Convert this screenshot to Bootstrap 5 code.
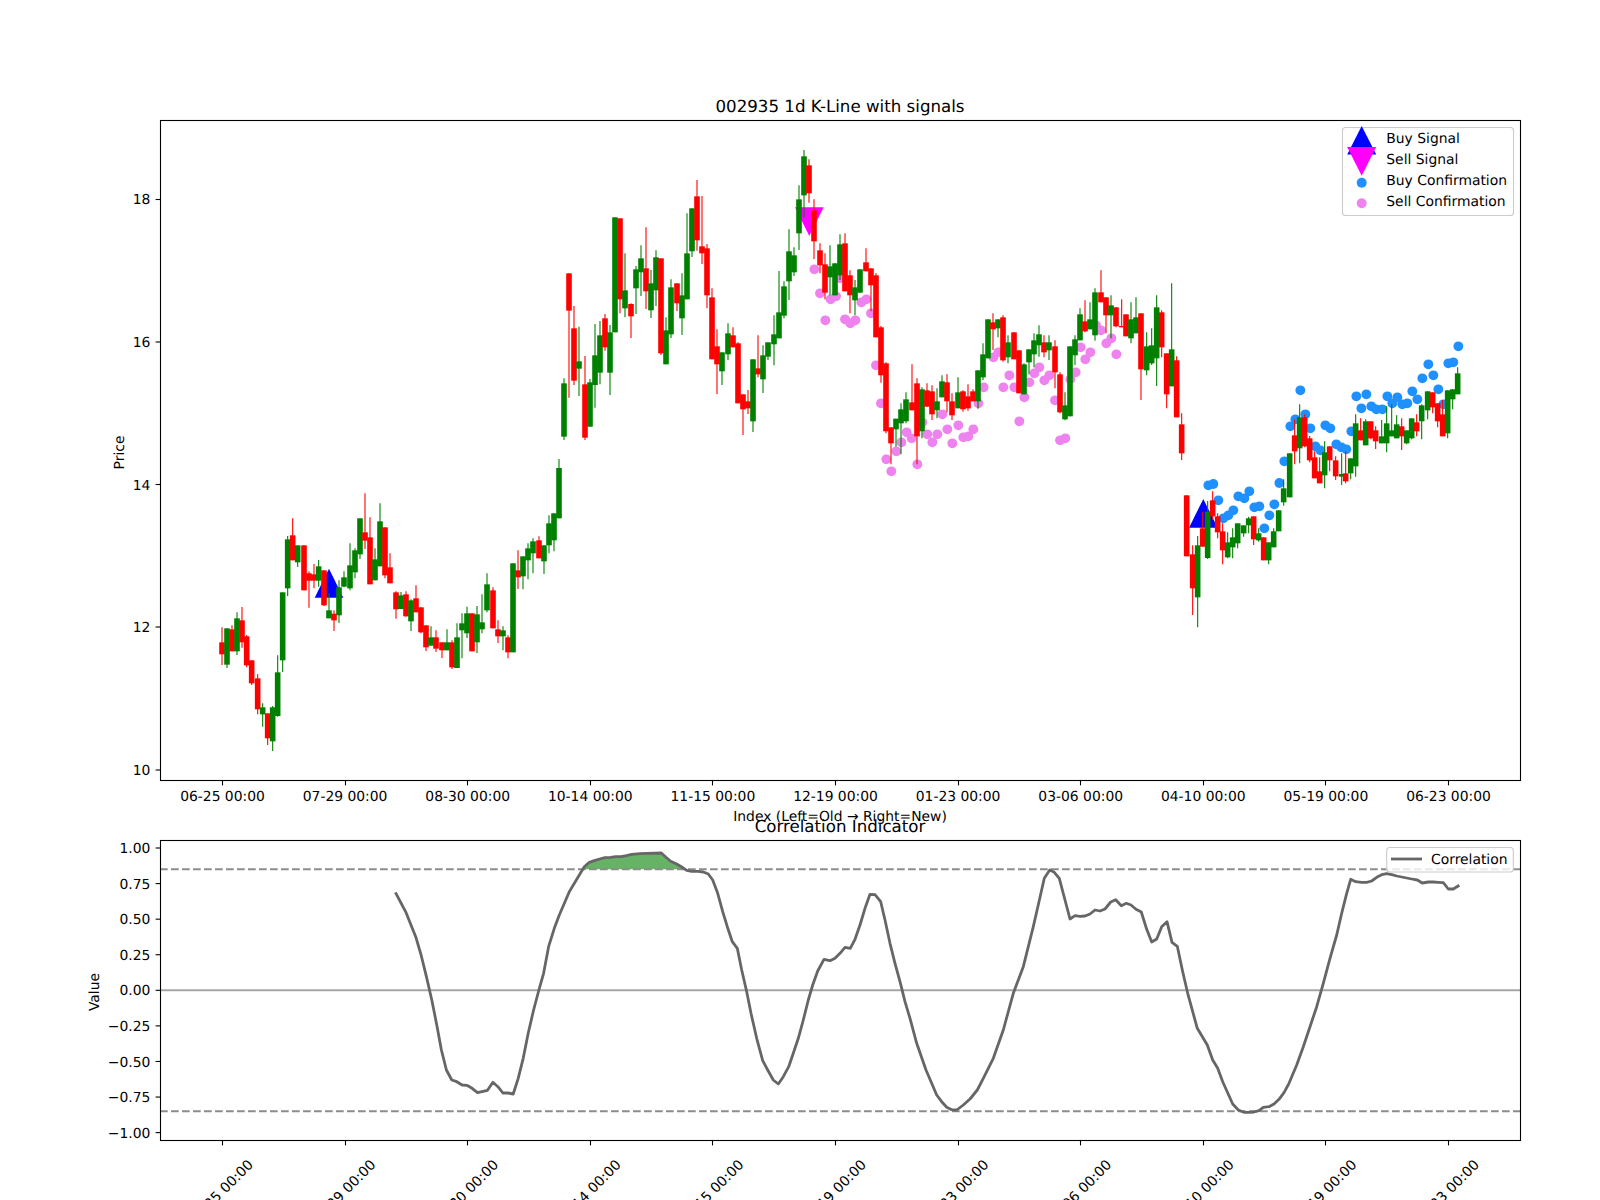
<!DOCTYPE html>
<html lang="en">
<head>
<meta charset="utf-8">
<title>002935 1d K-Line with signals</title>
<link href="https://cdn.jsdelivr.net/npm/bootstrap@5.3.0/dist/css/bootstrap.min.css" rel="stylesheet">
<style>
html,body{background:#fff;margin:0;padding:0;overflow:hidden}
.figure-wrap{width:1600px;height:1200px}
.figure-svg{display:block;width:1600px;height:1200px}
.figure-svg text{font-family:"DejaVu Sans",sans-serif;font-size:13.89px;fill:#000;text-rendering:geometricPrecision}
.figure-svg text.plot-title{font-size:16.67px}
.spine{fill:none;stroke:#000;stroke-width:1.1}
.tick-line{stroke:#000;stroke-width:1.1}
.legend-frame{fill:#fff;fill-opacity:.8;stroke:#ccc;stroke-width:1.1}
.thresh{stroke:#8c8c8c;stroke-width:2.08;stroke-dasharray:7.7 3.3;fill:none}
.zero-line{stroke:#a6a6a6;stroke-width:2.08}
.corr-line{stroke:#666;stroke-width:2.8;fill:none;stroke-linejoin:round}
.corr-fill{fill:#66b366}
</style>
</head>
<body>
<div class="figure-wrap bg-white">
<svg class="figure-svg" id="fig" xmlns="http://www.w3.org/2000/svg" viewBox="0 0 1600 1200">
  <g id="markers"></g>
  <g id="candles"></g>
  <g id="ticks"></g>
  <rect class="spine" x="160.5" y="120.5" width="1360" height="660"/>

  <text class="plot-title" x="840" y="111.7" text-anchor="middle">002935 1d K-Line with signals</text>
  <g text-anchor="end">
    <text x="150.3" y="204">18</text>
    <text x="150.3" y="347">16</text>
    <text x="150.3" y="489.5">14</text>
    <text x="150.3" y="632">12</text>
    <text x="150.3" y="775">10</text>
  </g>
  <text transform="translate(124,452.5) rotate(-90)" text-anchor="middle">Price</text>
  <g text-anchor="middle">
    <text x="222.5" y="800.5">06-25 00:00</text>
    <text x="345.1" y="800.5">07-29 00:00</text>
    <text x="467.7" y="800.5">08-30 00:00</text>
    <text x="590.3" y="800.5">10-14 00:00</text>
    <text x="712.9" y="800.5">11-15 00:00</text>
    <text x="835.5" y="800.5">12-19 00:00</text>
    <text x="958.1" y="800.5">01-23 00:00</text>
    <text x="1080.7" y="800.5">03-06 00:00</text>
    <text x="1203.3" y="800.5">04-10 00:00</text>
    <text x="1325.9" y="800.5">05-19 00:00</text>
    <text x="1448.5" y="800.5">06-23 00:00</text>
  </g>
  <text x="840" y="820.5" text-anchor="middle">Index (Left=Old → Right=New)</text>

  <rect class="legend-frame" x="1342.5" y="127.5" width="171" height="88" rx="3"/>
  <polygon fill="#0000ff" points="1361.7,126 1347.2,154.6 1376.2,154.6"/>
  <polygon fill="#ff00ff" points="1347.2,147 1376.2,147 1361.7,175.8"/>
  <circle cx="1361.7" cy="182.7" r="5" fill="#1e90ff"/>
  <circle cx="1361.7" cy="203.3" r="5" fill="#ee82ee"/>
  <text x="1386.3" y="143.3">Buy Signal</text>
  <text x="1386.3" y="164.3">Sell Signal</text>
  <text x="1386.3" y="185.3">Buy Confirmation</text>
  <text x="1386.3" y="206.3">Sell Confirmation</text>

  <polygon class="corr-fill" id="corrfill"/>
  <line class="zero-line" x1="160" y1="990.3" x2="1520" y2="990.3"/>
  <line class="thresh" x1="160" y1="869.3" x2="1520" y2="869.3"/>
  <line class="thresh" x1="160" y1="1111.3" x2="1520" y2="1111.3"/>
  <polyline class="corr-line" id="corrline"/>
  <rect class="spine" x="160.5" y="840.5" width="1360" height="300"/>

  <text class="plot-title" x="840" y="831.7" text-anchor="middle">Correlation Indicator</text>
  <g text-anchor="end">
    <text x="150.3" y="853">1.00</text>
    <text x="150.3" y="888.6">0.75</text>
    <text x="150.3" y="924.2">0.50</text>
    <text x="150.3" y="959.8">0.25</text>
    <text x="150.3" y="995.3">0.00</text>
    <text x="150.3" y="1030.9">−0.25</text>
    <text x="150.3" y="1066.5">−0.50</text>
    <text x="150.3" y="1102.1">−0.75</text>
    <text x="150.3" y="1137.7">−1.00</text>
  </g>
  <text transform="translate(99,992) rotate(-90)" text-anchor="middle">Value</text>
  <g text-anchor="middle">
    <text transform="rotate(-45 220.5 1192)" x="220.5" y="1197">06-25 00:00</text>
    <text transform="rotate(-45 343.1 1192)" x="343.1" y="1197">07-29 00:00</text>
    <text transform="rotate(-45 465.7 1192)" x="465.7" y="1197">08-30 00:00</text>
    <text transform="rotate(-45 588.3 1192)" x="588.3" y="1197">10-14 00:00</text>
    <text transform="rotate(-45 710.9 1192)" x="710.9" y="1197">11-15 00:00</text>
    <text transform="rotate(-45 833.5 1192)" x="833.5" y="1197">12-19 00:00</text>
    <text transform="rotate(-45 956.1 1192)" x="956.1" y="1197">01-23 00:00</text>
    <text transform="rotate(-45 1078.7 1192)" x="1078.7" y="1197">03-06 00:00</text>
    <text transform="rotate(-45 1201.3 1192)" x="1201.3" y="1197">04-10 00:00</text>
    <text transform="rotate(-45 1323.9 1192)" x="1323.9" y="1197">05-19 00:00</text>
    <text transform="rotate(-45 1446.5 1192)" x="1446.5" y="1197">06-23 00:00</text>
  </g>

  <rect class="legend-frame" x="1386.7" y="847.5" width="126.6" height="24.5" rx="3"/>
  <line x1="1391" y1="859" x2="1422" y2="859" stroke="#666" stroke-width="2.8"/>
  <text x="1431" y="864">Correlation</text>
</svg>
</div>
<script>
(function(){
  var NS='http://www.w3.org/2000/svg';
  function el(parent,name,attrs){var e=document.createElementNS(NS,name);for(var k in attrs)e.setAttribute(k,attrs[k]);parent.appendChild(e);return e;}
  var seg2=[[66,'r',517,553,472,585],[81,'g',475,584,475,594],[96,'r',478,544,466,544],[111,'g',445,544,427,555],[126,'r',451,517,411,533],[140,'r',499,586,495,592],[155,'r',571,640,571,645],[173,'r',625,718,613,733],[188,'g',712,733,700,770],[203,'r',730,805,730,825],[218,'g',712,814,708,843],[233,'g',607,738,556,740],[248,'g',367,571,367,606],[263,'g',208,355,198,378],[278,'r',196,271,145,271],[293,'g',226,277,226,291],[312,'r',226,361,226,361],[327,'r',310,332,304,413],[342,'r',313,332,282,355],[356,'g',289,332,270,350],[372,'r',301,406,301,408],[387,'g',421,445,370,445],[402,'r',431,451,421,483],[417,'g',352,436,331,459],[432,'g',322,350,304,352],[450,'g',286,355,220,361],[465,'g',241,307,235,325],[480,'g',145,253,145,267],[495,'r',187,212,70,237],[510,'r',202,343,142,343],[525,'g',268,331,235,331],[540,'g',154,289,100,289],[555,'r',172,316,172,325],[570,'r',292,340,250,340],[588,'r',367,418,364,446],[603,'g',376,417,366,417],[618,'r',373,439,364,440],[633,'g',391,454,388,483],[648,'r',385,427,346,427],[663,'r',412,487,412,490],[678,'r',466,532,466,543],[693,'g',502,527,469,527],[708,'r',502,536,481,546],[726,'r',517,541,517,564],[741,'g',517,541,478,541],[756,'r',517,592,511,597],[771,'g',502,594,460,594],[786,'g',460,481,430,565],[801,'g',430,490,410,504],[816,'r',430,544,430,544],[831,'g',433,517,408,549],[846,'g',457,478,373,490],[861,'g',343,421,310,427],[879,'r',361,475,352,475],[894,'r',478,499,451,519],[909,'g',481,499,469,541],[924,'r',502,547,496,565],[939,'g',280,547,280,547],[954,'r',301,322,241,357],[969,'g',259,319,259,358],[984,'g',235,271,220,328],[999,'g',214,250,205,310],[1017,'r',211,265,199,265],[1032,'g',226,274,226,312],[1047,'g',160,226,136,250],[1062,'g',130,211,130,244],[1077,'g',-6,145,-33,145]];
  var seg3=[[72,'g',730,890,715,900],[87,'r',400,512,400,773],[102,'r',565,722,498,735],[117,'g',664,686,560,768],[135,'r',733,893,648,900],[150,'g',727,860,717,860],[165,'g',646,735,552,803],[180,'g',586,698,543,733],[195,'r',535,622,522,632],[210,'g',577,698,555,765],[225,'g',232,577,232,577],[240,'r',235,478,235,520],[255,'g',451,505,340,532],[273,'r',492,529,490,594],[288,'g',388,445,378,522],[303,'g',355,397,316,468],[318,'r',385,454,262,507],[333,'g',430,511,390,534],[348,'g',352,451,331,498],[363,'r',355,640,355,645],[378,'g',571,673,532,673],[393,'g',442,583,418,594],[411,'r',430,490,430,513],[426,'g',466,535,400,585],[441,'g',340,478,220,478],[456,'g',205,334,205,351],[471,'r',169,301,120,332],[486,'r',319,340,168,372],[501,'r',325,466,312,505],[516,'r',472,658,445,658],[531,'r',619,673,568,762],[546,'g',637,694,637,735],[564,'g',580,643,550,660],[579,'r',586,622,562,622],[594,'r',610,790,607,790],[609,'r',763,808,763,885],[624,'r',784,805,750,822],[639,'g',658,844,658,876],[654,'r',685,703,586,712],[669,'g',646,718,616,759],[684,'g',607,650,607,660],[702,'g',583,613,526,676],[717,'g',517,595,393,595],[732,'g',439,527,424,535],[747,'g',334,424,268,480],[762,'g',346,397,322,408],[777,'g',178,280,136,330],[792,'g',49,166,30,232],[807,'r',76,160,58,188],[822,'r',211,304,178,357],[840,'r',331,376,310,400],[855,'r',373,458,340,478],[870,'g',379,412,316,466],[885,'g',370,466,370,466],[900,'g',313,406,283,420],[915,'r',310,454,280,454],[930,'r',406,466,391,520],[945,'g',442,481,420,526],[960,'g',388,458,388,458],[978,'r',367,394,325,394],[993,'r',385,436,385,514],[1008,'r',406,592,400,592]];
  var seg4=[[63,'r',232,376,228,398],[78,'r',340,544,337,550],[93,'r',532,580,532,643],[108,'g',506,538,506,590],[123,'g',478,520,460,613],[138,'g',448,514,427,520],[156,'r',457,481,343,481],[171,'r',400,559,385,643],[186,'g',418,544,412,565],[201,'r',421,470,400,470],[216,'r',424,493,406,510],[231,'g',454,481,415,505],[246,'g',394,442,376,442],[261,'r',397,454,373,487],[276,'r',454,496,430,510],[294,'g',427,475,382,475],[309,'r',424,478,421,485],[324,'r',439,475,403,482],[339,'r',424,454,418,454],[354,'g',361,454,361,476],[369,'g',313,382,280,390],[384,'g',208,325,208,325],[399,'r',217,238,190,300],[414,'g',208,235,208,262],[429,'r',202,331,196,335],[444,'g',277,322,256,340],[462,'r',247,328,247,328],[477,'r',301,430,301,430],[492,'g',343,433,340,433],[507,'g',298,337,298,373],[522,'g',271,313,250,352],[537,'g',253,286,226,320],[552,'r',277,307,256,322],[567,'g',277,301,256,330],[585,'r',289,367,271,415],[600,'r',373,487,367,490],[615,'g',466,508,427,511],[630,'g',289,499,289,499],[645,'g',268,316,256,345],[660,'g',193,271,175,271],[675,'r',214,244,151,247],[690,'g',208,238,157,238],[705,'g',127,256,115,272],[723,'r',127,157,61,157],[738,'r',142,196,142,250],[753,'g',166,196,136,265],[768,'r',172,229,172,232],[785,'r',228,232,148,232],[798,'r',193,259,193,259],[813,'g',208,265,157,280],[828,'g',202,250,142,250],[843,'r',190,358,190,450],[860,'g',289,361,247,376],[875,'g',286,340,235,345],[890,'g',172,325,136,408],[905,'r',187,292,181,322],[920,'r',310,433,310,475],[935,'g',298,409,100,409],[950,'r',331,502,319,502],[965,'r',523,610,490,630]];
  var seg5=[[80,'r',526,709,526,709],[98,'r',703,805,676,885],[113,'g',676,832,648,922],[128,'r',625,680,575,680],[143,'g',575,714,543,717],[158,'r',541,589,514,600],[173,'r',589,637,580,655],[188,'r',634,691,610,733],[203,'g',667,712,637,715],[218,'g',652,682,625,715],[233,'g',610,670,610,685],[251,'g',616,640,616,650],[266,'g',595,616,590,640],[281,'r',589,658,589,675],[296,'g',640,661,625,665],[311,'r',652,721,652,721],[326,'g',667,721,667,733],[341,'g',634,682,625,682],[356,'g',571,634,571,634],[371,'g',505,547,478,557],[389,'g',400,532,400,532],[404,'r',346,394,298,433],[419,'g',292,385,253,430],[434,'r',292,379,283,382],[449,'r',355,421,348,427],[464,'r',412,475,394,475],[479,'r',454,490,412,490],[494,'g',397,466,364,505],[509,'r',379,421,379,454],[527,'r',421,469,409,480],[545,'g',462,470,400,495],[557,'r',460,484,394,490],[572,'g',415,460,415,478],[587,'g',310,439,283,470],[602,'r',331,361,295,361],[617,'g',304,376,298,376],[632,'r',304,355,304,358],[647,'r',331,364,319,387],[665,'g',349,370,300,370],[680,'g',310,370,259,397],[695,'g',331,349,253,349],[710,'g',313,355,286,355],[725,'r',319,349,295,390],[740,'g',331,370,331,373],[755,'g',295,355,295,358],[770,'r',307,334,283,349],[785,'g',256,304,253,358],[803,'g',214,271,214,298],[818,'r',217,262,217,280],[833,'r',250,304,250,322],[848,'r',283,349,240,349],[863,'g',211,340,211,355],[878,'g',208,238,208,268],[893,'g',160,223,142,223]];
  var candles=document.getElementById('candles'),COL={r:'#ff0000',g:'#008000'};
  function draw(list,ox,oy){list.forEach(function(b){
    var x=ox+b[0]/3,c=COL[b[1]],t=oy+b[2]/3,d=oy+b[3]/3,wt=oy+b[4]/3,wb=oy+b[5]/3;
    el(candles,'line',{x1:x,x2:x,y1:wt,y2:wb,stroke:c,'stroke-width':1.1});
    el(candles,'rect',{x:x-2.8,y:t,width:5.6,height:Math.max(d-t,1),fill:c});
  });}
  draw(seg2,200,470);draw(seg3,540,140);draw(seg4,860,250);draw(seg5,1160,320);

  var mk=document.getElementById('markers');
  function dots(list,ox,oy,col){list.forEach(function(p){el(mk,'circle',{cx:ox+p[0]/3,cy:oy+p[1]/3,r:4.9,fill:col});});}
  dots([[823,388],[840,460],[856,541],[872,478],[888,469],[900,415],[915,538],[931,550],[946,541]],540,140,'#ee82ee');
  dots([[4,157],[19,148],[33,190],[48,346],[63,460],[79,628],[94,664],[109,604],[124,577],[140,547],[155,565],[172,643],[187,517],[202,553],[217,577],[232,553],[247,493],[262,538],[277,580],[295,526],[310,562],[325,559],[340,538],[355,460],[371,412],[400,322],[415,307],[430,412],[448,376],[463,412],[478,514],[493,442],[508,397],[523,370],[538,352],[553,391],[568,376],[585,451],[600,571],[616,565],[631,388],[647,367],[662,292],[676,328],[691,307],[708,226],[723,241],[739,280],[754,265],[769,313]],860,250,'#ee82ee');
  dots([[145,496],[160,492],[175,541],[190,595],[205,586],[220,571],[235,529],[253,535],[268,514],[283,562],[298,559],[313,625],[328,586],[343,553],[358,489],[373,424],[391,319],[406,298],[421,211],[436,283],[451,325],[466,379],[481,391],[496,316],[511,325],[529,373],[544,382],[559,388],[574,334],[589,229],[604,265],[619,223],[634,259],[649,268],[667,268],[682,229],[697,250],[712,232],[727,253],[742,250],[757,214],[772,238],[787,175],[805,133],[820,166],[835,208],[850,253],[865,130],[880,127],[895,79]],1160,320,'#1e90ff');
  function tri(pts,col){el(mk,'polygon',{points:pts,fill:col});}
  tri('329,568.7 314.7,597.7 343.3,597.7','#0000ff');
  tri('1203.3,499 1189,527.7 1217.6,527.7','#0000ff');
  tri('795,207.3 823.6,207.3 809.3,236','#ff00ff');

  var t=document.getElementById('ticks');
  for(var k=0;k<11;k++){var x=Math.round(222.5+122.6*k-.5)+.5;
    el(t,'line',{class:'tick-line',x1:x,x2:x,y1:781,y2:785.4});
    el(t,'line',{class:'tick-line',x1:x,x2:x,y1:1141,y2:1145.4});}
  [199.5,342,484.5,627,770].forEach(function(y){el(t,'line',{class:'tick-line',x1:155.6,x2:160,y1:y,y2:y});});
  for(var j=0;j<9;j++){var yy=848+35.58*j;el(t,'line',{class:'tick-line',x1:155.6,x2:160,y1:yy,y2:yy});}

  var pts=[];
  [[883,367],[913,428],[940,500],[955,555],[970,620],[985,690],[1000,770],[1012,840],[1026,900],[1041,930],[1055,935],[1070,945],[1083,946],[1098,955],[1113,968],[1141,961],[1156,937],[1170,950],[1184,969],[1198,969],[1213,972],[1227,925],[1241,865],[1255,790],[1270,720],[1285,660],[1298,610],[1312,530],[1328,475],[1342,435],[1370,365],[1398,315],[1412,290],[1426,277],[1440,272],[1455,267],[1470,263],[1485,262],[1500,260],[1515,260],[1530,257],[1545,253],[1568,251]].forEach(function(p){pts.push([80+p[0]/2.8,770+p[1]/3]);});
  [[20,250],[64,249],[78,262],[92,274],[110,282],[125,291],[140,301],[155,304],[175,304],[190,306],[205,312],[218,330],[233,370],[248,425],[262,470],[277,515],[292,535],[305,600],[320,665],[333,730],[350,805],[368,872],[383,900],[400,930],[415,942],[430,920],[446,890],[460,850],[475,805],[490,750],[505,690],[518,645],[533,603],[552,568],[570,572],[585,565],[600,550],[615,532],[631,535],[645,508],[660,465],[675,415],[690,373],[705,374],[722,395],[735,450],[750,520],[765,580],[780,635],[795,695],[810,745],[830,820],[858,900],[890,975],[905,995],[920,1012],[935,1019],[950,1020],[970,1005],[990,987],[1012,960],[1030,925],[1060,865],[1090,780],[1120,670],[1150,590],[1180,470],[1197,395],[1213,325],[1229,300],[1243,307],[1258,325],[1275,390],[1290,447],[1305,437],[1320,439],[1335,438],[1350,432],[1365,420]].forEach(function(p){pts.push([640+p[0]/3,770+p[1]/3]);});
  [[0,423],[15,417],[32,396],[47,389],[64,407],[79,400],[93,405],[108,418],[124,426],[140,478],[155,516],[170,507],[185,470],[201,455],[216,517],[232,529],[248,605],[263,670],[278,725],[292,775],[322,825],[338,870],[353,895],[368,935],[398,1002],[415,1020],[432,1027],[447,1027],[462,1026],[477,1022],[490,1012],[507,1010],[522,1002],[537,988],[552,968],[567,940],[590,885],[610,830],[630,770],[650,710],[670,640],[690,565],[710,495],[725,430],[740,370],[752,328],[767,335],[785,337],[800,337],[815,333],[830,322],[845,314],[860,311],[875,314],[890,318],[905,321],[920,324],[935,327],[952,330],[967,339],[985,336],[1000,336],[1015,337],[1030,338],[1045,357],[1060,357],[1078,346]].forEach(function(p){pts.push([1100+p[0]/3,770+p[1]/3]);});
  var s=function(p){return p[0].toFixed(1)+','+p[1].toFixed(1);};
  document.getElementById('corrline').setAttribute('points',pts.map(s).join(' '));
  var TH=869.3,f=pts.filter(function(p){return p[1]<TH&&p[0]<700;});
  var poly=[[f[0][0]-3,TH]].concat(f,[[f[f.length-1][0]+3,TH]]);
  document.getElementById('corrfill').setAttribute('points',poly.map(s).join(' '));
})();
</script>
<script src="https://cdn.jsdelivr.net/npm/bootstrap@5.3.0/dist/js/bootstrap.bundle.min.js"></script>
</body>
</html>
